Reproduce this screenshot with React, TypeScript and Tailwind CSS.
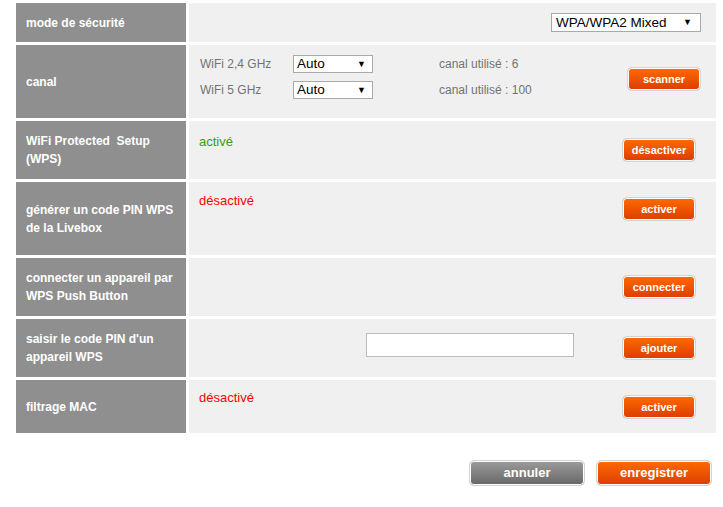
import React from "react";

const font = { fontFamily: '"Liberation Sans", Arial, sans-serif' };

function Btn({ children, className = "" }: { children: React.ReactNode; className?: string }) {
  return (
    <div
      className={
        "flex h-[24px] w-[74px] shrink-0 items-center justify-center rounded-[5px] border border-[#d2d2d2] bg-gradient-to-b from-[#ff6a00] to-[#dc3c00] text-[11px] font-bold text-white shadow-[inset_0_0_0_1px_#ffffff] " +
        className
      }
    >
      {children}
    </div>
  );
}

function FakeSelect({ value, className = "", textSize = "text-[13px]" }: { value: string; className?: string; textSize?: string }) {
  return (
    <div
      className={
        "flex items-center justify-between border border-[#a9a9a9] bg-white pl-[3px] pr-[6px] text-black " +
        textSize +
        " " +
        className
      }
    >
      <span className="leading-none">{value}</span>
      <span className="text-[9px] leading-none">▼</span>
    </div>
  );
}

function Label({ children }: { children: React.ReactNode }) {
  return (
    <div className="flex w-[170px] shrink-0 items-center bg-[#8f8f8f] pl-[10px] pr-[8px] text-[12px] font-bold leading-[18px] text-white">
      <div>{children}</div>
    </div>
  );
}

export default function App() {
  return (
    <div style={font} className="min-h-[507px] w-[723px] bg-white">
      <div className="flex w-[700px] flex-col gap-[3px] pl-[16px] pt-[3px] box-content">
        {/* row 1 */}
        <div className="flex h-[39px] gap-[3px]">
          <Label>mode de sécurité</Label>
          <div className="flex flex-1 items-start justify-end bg-[#f0f0f0] pr-[15px] pt-[10px]">
            <FakeSelect value="WPA/WPA2 Mixed" className="h-[19px] w-[150px] pl-[4px] pr-[8px]" textSize="text-[13.5px]" />
          </div>
        </div>

        {/* row 2 */}
        <div className="flex h-[73px] gap-[3px]">
          <Label>canal</Label>
          <div className="flex flex-1 items-start justify-between bg-[#f0f0f0] pl-[11px] pr-[15px]">
            <div className="flex flex-col gap-[8px] pt-[10px] text-[12px] text-[#737373]">
              <div className="flex h-[18px] items-center">
                <span className="w-[93px]">WiFi 2,4 GHz</span>
                <FakeSelect value="Auto" className="h-[18px] w-[80px]" textSize="text-[13.5px]" />
                <span className="ml-[66px]">canal utilisé : 6</span>
              </div>
              <div className="flex h-[18px] items-center">
                <span className="w-[93px]">WiFi 5 GHz</span>
                <FakeSelect value="Auto" className="h-[18px] w-[80px]" textSize="text-[13.5px]" />
                <span className="ml-[66px]">canal utilisé : 100</span>
              </div>
            </div>
            <Btn className="mt-[22px]">scanner</Btn>
          </div>
        </div>

        {/* row 3 */}
        <div className="flex h-[58px] gap-[3px]">
          <Label>WiFi Protected&nbsp; Setup (WPS)</Label>
          <div className="flex flex-1 items-start justify-between bg-[#f0f0f0] pl-[10px] pr-[20px]">
            <span className="pt-[12px] text-[13px] leading-[18px] text-[#3b9a1a]">activé</span>
            <Btn className="mt-[17px]">désactiver</Btn>
          </div>
        </div>

        {/* row 4 */}
        <div className="flex h-[73px] gap-[3px]">
          <Label>générer un code PIN WPS de la Livebox</Label>
          <div className="flex flex-1 items-start justify-between bg-[#f0f0f0] pl-[10px] pr-[20px]">
            <span className="pt-[10px] text-[13px] leading-[18px] text-[#ff0000]">désactivé</span>
            <Btn className="mt-[15px]">activer</Btn>
          </div>
        </div>

        {/* row 5 */}
        <div className="flex h-[58px] gap-[3px]">
          <Label>connecter un appareil par WPS Push Button</Label>
          <div className="flex flex-1 items-start justify-end bg-[#f0f0f0] pl-[10px] pr-[20px]">
            <Btn className="mt-[17px]">connecter</Btn>
          </div>
        </div>

        {/* row 6 */}
        <div className="flex h-[58px] gap-[3px]">
          <Label>saisir le code PIN d'un appareil WPS</Label>
          <div className="flex flex-1 items-start justify-end gap-[48px] bg-[#f0f0f0] pl-[10px] pr-[20px]">
            <div className="mt-[14px] h-[24px] w-[208px] border border-[#bcbcbc] bg-white" />
            <Btn className="mt-[17px]">ajouter</Btn>
          </div>
        </div>

        {/* row 7 */}
        <div className="flex h-[53px] gap-[3px]">
          <Label>filtrage MAC</Label>
          <div className="flex flex-1 items-start justify-between bg-[#f0f0f0] pl-[10px] pr-[20px]">
            <span className="pt-[9px] text-[13px] leading-[18px] text-[#ff0000]">désactivé</span>
            <Btn className="mt-[15px]">activer</Btn>
          </div>
        </div>
      </div>

      <div className="mt-[27px] flex justify-end gap-[11px] pr-[11px]">
        <div className="flex h-[26px] w-[116px] items-center justify-center rounded-[5px] border border-[#d2d2d2] bg-gradient-to-b from-[#9c9c9c] to-[#676767] text-[13px] font-bold text-white shadow-[inset_0_0_0_1px_#ffffff]">
          annuler
        </div>
        <div className="flex h-[26px] w-[116px] items-center justify-center rounded-[5px] border border-[#d2d2d2] bg-gradient-to-b from-[#ff6a00] to-[#dc3c00] text-[13px] font-bold text-white shadow-[inset_0_0_0_1px_#ffffff]">
          enregistrer
        </div>
      </div>
    </div>
  );
}
